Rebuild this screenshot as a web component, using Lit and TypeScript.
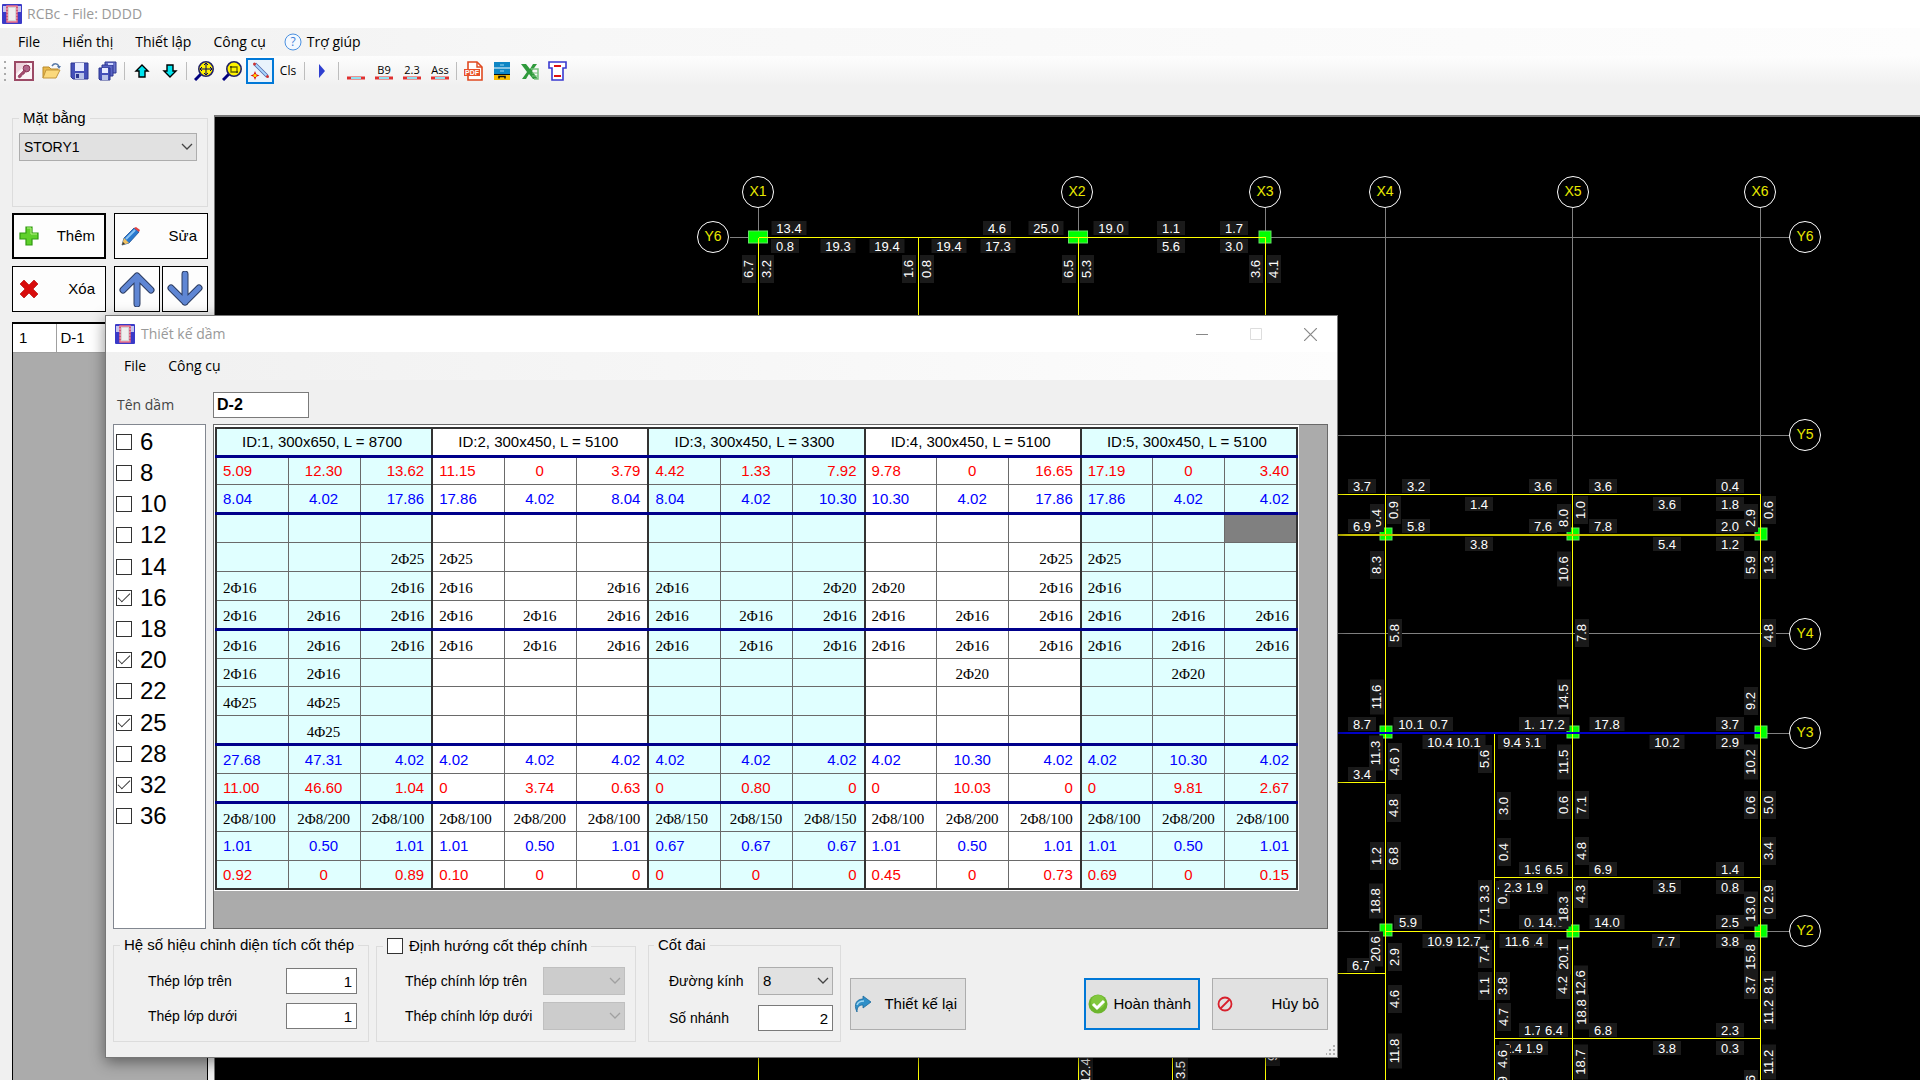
import { LitElement, html, svg, css } from "lit";
import { customElement, property } from "lit/decorators.js";
import { classMap } from "lit/directives/class-map.js";

/* ---------- icons ---------- */

const beamIcon = html`<svg class="icon" viewBox="0 0 20 20" width="20" height="20" aria-hidden="true">
  <rect width="20" height="20" rx="1" fill="#3a3ac8" />
  <path d="M1 2h4v6H1zM15 2h4v6h-4z" fill="#c4c4ec" />
  <path d="M5 2h10v16H5z" fill="#d4d4d4" stroke="#ee7088" stroke-width="1.5" />
  <path d="M5 3v14M15 3v14" stroke="#b03058" stroke-width="1" stroke-dasharray="1 2" />
  <path d="M7 4h6v12H7z" fill="#eeeeee" />
</svg>`;

const chevron = html`<svg class="chevron" viewBox="0 0 12 8" width="12" height="8" aria-hidden="true">
  <path d="M1 1l5 5 5-5" fill="none" stroke="currentColor" stroke-width="1.3" />
</svg>`;

const icons: Record<string, unknown> = {
  access: svg`<rect x="1" y="1" width="18" height="18" fill="#fbf3f6" stroke="#9c4a66" stroke-width="2"/>
    <path d="M2 13L13 2H2z" fill="#eed5de"/>
    <circle cx="12.5" cy="7.5" r="3.4" fill="#b0668a" stroke="#8c3354"/>
    <path d="M10 9l-6 6 1 2 2-1 1-2 2-1 2-3z" fill="#a34a6d" stroke="#8c3354" stroke-width=".6"/>`,
  open: svg`<path d="M1 17V6h6l2 2h7v3" fill="#e8b84a" stroke="#b98a2a"/>
    <path d="M1 17l3-8h14l-4 8z" fill="#fbd97c" stroke="#c2953a"/>
    <path d="M10 5c2-3 6-3 7 1" fill="none" stroke="#5577a5" stroke-width="1.5"/><path d="M15 5h4l-2 3z" fill="#5577a5"/>`,
  save: svg`<path d="M1 2h17v16H3l-2-2z" fill="#4450b8" stroke="#2c3690"/>
    <path d="M5 2h9v8H5z" fill="#e8ecff"/><path d="M5 12h9v6H5z" fill="#b8c2e8"/><path d="M6 13h3v4H6z" fill="#2c3690"/>`,
  saveAll: svg`<path d="M7 1h11v11H7z" fill="#6a74cc" stroke="#2c3690"/><path d="M4 4h11v11H4z" fill="#5a64c4" stroke="#2c3690"/>
    <path d="M1 7h11v12H2l-1-1z" fill="#4450b8" stroke="#2c3690"/><path d="M4 7h6v5H4z" fill="#e8ecff"/><path d="M4 14h6v5H4z" fill="#b8c2e8"/>
    <path d="M10 2h5v2h-5z" fill="#cdd4ff"/>`,
  up: svg`<path d="M10 4l6 6h-3v6H7v-6H4z" fill="#00e5f0" stroke="#000" stroke-width="1.4"/>`,
  down: svg`<path d="M10 16l6-6h-3V4H7v6H4z" fill="#00e5f0" stroke="#000" stroke-width="1.4"/>`,
  zoomAll: svg`<path d="M7 13l-6 6" stroke="#000080" stroke-width="3"/><circle cx="12" cy="8" r="7.2" fill="#fff200" stroke="#222266" stroke-width="1.6"/>
    <path d="M12 2v12M6 8h12M10 4l2-2 2 2M10 12l2 2 2-2M8 6L6 8l2 2M16 6l2 2-2 2" fill="none" stroke="#000060" stroke-width="1"/>`,
  zoomWin: svg`<path d="M7 13l-6 6" stroke="#000080" stroke-width="3"/><circle cx="12" cy="8" r="7.2" fill="#fff200" stroke="#222266" stroke-width="1.6"/>
    <path d="M9 6h6v5H9z" fill="none" stroke="#666600" stroke-width="1.3"/><path d="M8 5h2v2H8zM14 10h2v2h-2z" fill="#555500"/>`,
  draw: svg`<path d="M5 3l12 12" stroke="#5566aa" stroke-width="3.4"/><path d="M5 3l12 12" stroke="#a8d8ff" stroke-width="1.8"/>
    <circle cx="4.5" cy="3" r="1.5" fill="#c33"/><circle cx="17.5" cy="15.5" r="1.5" fill="#c33"/>
    <path d="M5 10l1.3 3.2L9.5 14.5l-3.2 1.3L5 19l-1.3-3.2L.5 14.5l3.2-1.3z" fill="#e01010"/><circle cx="5" cy="14.5" r="1.6" fill="#ffe000"/>`,
  play: svg`<path d="M7 3l6 7-6 7z" fill="#2f3fd0"/>`,
  pdf: svg`<path d="M4 1h9l5 5v13H4z" fill="#fff" stroke="#e04a20" stroke-width="1.6"/><path d="M13 1v5h5" fill="none" stroke="#e04a20" stroke-width="1.4"/>
    <rect x="0" y="8" width="16" height="7" fill="#e8502a"/><text x="8" y="14" font-size="7" font-weight="700" text-anchor="middle" fill="#fff" font-family="Liberation Sans, sans-serif">PDF</text>`,
  cabinet: svg`<rect x="2" y="1" width="16" height="13" fill="#0f86c4"/><path d="M2 7h16" stroke="#fff"/><path d="M8 4h4M8 10h4" stroke="#9ad8f4"/>
    <rect x="2" y="13" width="16" height="6" fill="#f8bc00"/><path d="M2 13.5h16" stroke="#111" stroke-width="1"/><path d="M7 17.5v-2h6v2" fill="none" stroke="#111" stroke-width="1.6"/>`,
  excel: svg`<path d="M1 3h5l4 5 3-5h4l-5 7 6 8h-5l-4-5-3 5H2l5-7z" fill="#2f9a3c"/><path d="M11 8h7v10h-4" fill="none" stroke="#79c27f" stroke-width="1.5"/><path d="M12 12h6M12 15h6" stroke="#79c27f"/>`,
  section: svg`<path d="M1 1h17v6h-3v12H4V7H1z" fill="#fff" stroke="#3a3ad0" stroke-width="1.6"/><path d="M6 5h7M6 15h7" stroke="#e01010" stroke-width="2"/>`,
};

const icon = (name: string) =>
  html`<svg class="icon" viewBox="0 0 20 20" width="20" height="20" aria-hidden="true">${icons[name]}</svg>`;

const lineIcon = (text: string) => html`<span class="lined"
  ><span class="lined-text">${text}</span
  ><svg viewBox="0 0 20 4" width="20" height="4" aria-hidden="true">
    <path d="M1 2h18" stroke="#e03030" stroke-width="3" /><path d="M5 2h10" stroke="#8fe0f0" stroke-width="2" /></svg
></span>`;

/* ---------- floor plan ---------- */

const X = { x1: 758, xm: 918, x2: 1078, x2b: 1172, x3: 1265, x4: 1385, x4b: 1494, x5: 1572, x6: 1760 };
const Y = { y6: 237, y5: 435, y4: 633, y3: 733, y2: 931 };

type Line = [number, number, number, number];

const axes: Line[] = [
  [X.x1, 207, X.x1, 237], [X.x2, 207, X.x2, 237], [X.x3, 207, X.x3, 237],
  [X.x4, 207, X.x4, 494], [X.x5, 207, X.x5, 494], [X.x6, 207, X.x6, 494],
  [729, Y.y6, 1790, Y.y6], [729, Y.y5, 1790, Y.y5], [729, Y.y4, 1790, Y.y4],
  [729, Y.y3, 1790, Y.y3], [729, Y.y2, 1790, Y.y2],
];

const beams: Line[] = [
  [X.x1, 237, X.x3, 237],
  [X.x1, 237, X.x1, 1400], [X.xm, 237, X.xm, 1400], [X.x2, 237, X.x2, 1400], [X.x3, 237, X.x3, 1400],
  [X.x2b, 900, X.x2b, 1400],
  [X.x3, 494, X.x6, 494],
  [X.x4, 494, X.x4, 1400], [X.x5, 494, X.x5, 1400], [X.x6, 494, X.x6, 1400],
  [X.x4b, Y.y3, X.x4b, 1400],
  [X.x3, 782, X.x4, 782], [X.x4b, 877, X.x6, 877], [X.x4, Y.y2, X.x6, Y.y2],
  [X.x3, 973, X.x4, 973], [X.x4b, 1038, X.x6, 1038],
];

/* centre x, centre y, width of each column section */
const columns: [number, number, number][] = [
  [758, 237, 19], [1078, 237, 19], [1265, 237, 12],
  [1386, 534, 12], [1573, 534, 12], [1761, 534, 12],
  [1386, 732, 12], [1573, 732, 12], [1761, 732, 12],
  [1386, 930, 12], [1573, 931, 12], [1761, 931, 12],
];

const bubbles: [string, number, number][] = [
  ["X1", 758, 192], ["X2", 1077, 192], ["X3", 1265, 192], ["X4", 1385, 192], ["X5", 1573, 192], ["X6", 1760, 192],
  ["Y6", 713, 237], ["Y6", 1805, 237], ["Y5", 1805, 435], ["Y4", 1805, 634], ["Y3", 1805, 733], ["Y2", 1805, 931],
];

/* text, centre x, centre y, 1 when the value runs along a vertical beam */
const values: [string, number, number, number][] = [
  ["13.4", 789, 228, 0], ["0.8", 785, 246, 0], ["19.3", 838, 246, 0], ["19.4", 887, 246, 0], ["19.4", 949, 246, 0],
  ["17.3", 998, 246, 0], ["4.6", 997, 228, 0], ["25.0", 1046, 228, 0], ["19.0", 1111, 228, 0], ["1.1", 1171, 228, 0],
  ["1.7", 1234, 228, 0], ["5.6", 1171, 246, 0], ["3.0", 1234, 246, 0],
  ["6.7", 749, 269, 1], ["3.2", 767, 269, 1], ["1.6", 909, 269, 1], ["0.8", 927, 269, 1],
  ["6.5", 1069, 269, 1], ["5.3", 1087, 269, 1], ["3.6", 1256, 269, 1], ["4.1", 1274, 269, 1],

  ["3.7", 1362, 486, 0], ["3.2", 1416, 486, 0], ["3.6", 1543, 486, 0], ["3.6", 1603, 486, 0], ["0.4", 1730, 486, 0],
  ["1.4", 1479, 504, 0], ["3.6", 1667, 504, 0], ["1.8", 1730, 504, 0],
  ["0.4", 1377, 518, 1], ["6.9", 1362, 526, 0], ["5.8", 1416, 526, 0], ["7.6", 1543, 526, 0], ["7.8", 1603, 526, 0],
  ["2.0", 1730, 526, 0], ["3.8", 1479, 544, 0], ["5.4", 1667, 544, 0], ["1.2", 1730, 544, 0],
  ["0.9", 1394, 510, 1], ["8.0", 1564, 518, 1], ["1.0", 1581, 510, 1], ["2.9", 1751, 518, 1], ["0.6", 1769, 510, 1],
  ["8.3", 1377, 565, 1], ["10.6", 1564, 569, 1], ["5.9", 1751, 565, 1], ["1.3", 1769, 565, 1],
  ["5.8", 1395, 633, 1], ["7.8", 1582, 633, 1], ["4.8", 1769, 633, 1],
  ["11.6", 1377, 697, 1], ["14.5", 1564, 697, 1], ["9.2", 1751, 701, 1],

  ["8.7", 1362, 724, 0], ["0.7", 1439, 724, 0], ["10.1", 1411, 724, 0], ["1.0", 1533, 724, 0], ["17.2", 1552, 724, 0],
  ["17.8", 1607, 724, 0], ["3.7", 1730, 724, 0],
  ["11.3", 1376, 753, 1], ["3.0", 1395, 757, 1], ["4.6", 1395, 766, 1], ["5.6", 1485, 759, 1],
  ["10.1", 1468, 742, 0], ["10.4", 1440, 742, 0], ["6.1", 1532, 742, 0], ["9.4", 1512, 742, 0], ["10.2", 1667, 742, 0],
  ["2.9", 1730, 742, 0],
  ["11.5", 1564, 762, 1], ["10.2", 1751, 762, 1], ["3.4", 1362, 774, 0],
  ["4.8", 1394, 808, 1], ["3.0", 1504, 806, 1], ["0.6", 1564, 805, 1], ["7.1", 1582, 805, 1], ["0.6", 1751, 805, 1],
  ["5.0", 1769, 805, 1],
  ["1.2", 1377, 856, 1], ["6.8", 1394, 856, 1], ["0.4", 1504, 852, 1], ["4.8", 1582, 851, 1], ["3.4", 1769, 851, 1],

  ["1.9", 1533, 869, 0], ["6.5", 1554, 869, 0], ["6.9", 1603, 869, 0], ["1.4", 1730, 869, 0],
  ["0.4", 1503, 895, 1], ["1.9", 1534, 887, 0], ["2.3", 1513, 887, 0], ["3.5", 1667, 887, 0], ["0.8", 1730, 887, 0],
  ["18.8", 1376, 901, 1], ["3.3", 1485, 894, 1], ["7.1", 1485, 916, 1], ["4.3", 1581, 894, 1],
  ["0.8", 1769, 905, 1], ["2.9", 1769, 894, 1],
  ["5.9", 1408, 922, 0], ["0.3", 1533, 922, 0], ["14.0", 1551, 922, 0], ["14.0", 1607, 922, 0], ["2.5", 1730, 922, 0],
  ["18.3", 1564, 909, 1], ["13.0", 1751, 909, 1],
  ["12.7", 1468, 941, 0], ["10.9", 1440, 941, 0], ["6.4", 1534, 941, 0], ["11.6", 1517, 941, 0], ["7.7", 1666, 941, 0],
  ["3.8", 1730, 941, 0],
  ["6.7", 1361, 965, 0], ["20.6", 1376, 949, 1], ["2.9", 1395, 957, 1], ["7.4", 1485, 954, 1], ["20.1", 1564, 957, 1],
  ["15.8", 1751, 957, 1],
  ["1.1", 1485, 986, 1], ["3.8", 1503, 986, 1], ["4.2", 1563, 985, 1], ["12.6", 1581, 983, 1], ["18.8", 1582, 1012, 1],
  ["3.7", 1751, 985, 1], ["8.1", 1769, 985, 1], ["11.2", 1769, 1012, 1],
  ["4.6", 1395, 999, 1], ["4.7", 1504, 1017, 1],
  ["1.7", 1533, 1030, 0], ["6.4", 1554, 1030, 0], ["6.8", 1603, 1030, 0], ["2.3", 1730, 1030, 0],
  ["1.9", 1534, 1048, 0], ["2.4", 1513, 1048, 0], ["3.8", 1667, 1048, 0], ["0.3", 1730, 1048, 0],
  ["11.8", 1395, 1051, 1], ["1.9", 1503, 1085, 1], ["4.6", 1503, 1059, 1], ["18.7", 1581, 1062, 1],
  ["11.2", 1769, 1062, 1], ["2.6", 1751, 1084, 1],
  ["12.4", 1086, 1071, 1], ["3.5", 1181, 1070, 1], ["9.0", 1273, 1052, 1],
];

@customElement("floor-plan")
class FloorPlan extends LitElement {
  static styles = css`
    :host { display: block; background: #000; overflow: hidden; }
    .plan { display: block; width: 100%; height: 100%; font-family: "Liberation Sans", Arial, sans-serif; }
    .axis { stroke: #808080; shape-rendering: crispEdges; }
    .beam { stroke: #ffff00; shape-rendering: crispEdges; }
    .wide { stroke: #c8c000; stroke-width: 2; shape-rendering: crispEdges; }
    .blue { stroke: #0000c8; stroke-width: 2; shape-rendering: crispEdges; }
    .column { fill: #00ff00; stroke: #66e066; }
    .bubble { fill: #000; stroke: #fff; }
    .name { fill: #e8e800; font-size: 14px; text-anchor: middle; }
    .plate { fill: #1a1a1a; }
    .value { fill: #fff; font-size: 13px; text-anchor: middle; }
  `;
  render() {
    const line = (cls: string) => ([a, b, c, d]: Line) =>
      svg`<line class=${cls} x1=${a + 0.5} y1=${b + 0.5} x2=${c + 0.5} y2=${d + 0.5}></line>`;
    return html`<svg class="plan" role="img" aria-label="STORY1">
      <g transform="translate(-215 -117)">
        ${axes.map(line("axis"))}
        ${columns.map(([x, y, w]) => svg`<rect class="column" x=${x - w / 2} y=${y - 6} width=${w} height="12"></rect>`)}
        ${beams.map(line("beam"))}
        <line class="wide" x1="1265" y1="535" x2="1760" y2="535"></line>
        <line class="blue" x1="1265" y1="733" x2="1760" y2="733"></line>
        ${bubbles.map(([t, x, y]) => svg`<circle class="bubble" cx=${x} cy=${y} r="15.5"></circle>
          <text class="name" x=${x} y=${y + 4}>${t}</text>`)}
        ${values.map(([t, x, y, v]) => {
          const w = t.length > 3 ? 35 : 28;
          return svg`<g transform="translate(${x} ${y}) rotate(${v ? -90 : 0})">
            <rect class="plate" x=${-w / 2} y="-7" width=${w} height="14"></rect>
            <text class="value" y=${v ? 4 : 5}>${t}</text></g>`;
        })}
      </g>
    </svg>`;
  }
}

/* ---------- reinforcement table ---------- */

const spans = ["ID:1, 300x650, L = 8700", "ID:2, 300x450, L = 5100", "ID:3, 300x450, L = 3300", "ID:4, 300x450, L = 5100", "ID:5, 300x450, L = 5100"];

type Row = { kind: "need" | "have" | "bar"; thick?: boolean; cells: string };
const rows: Row[] = [
  { kind: "need", cells: "5.09|12.30|13.62|11.15|0|3.79|4.42|1.33|7.92|9.78|0|16.65|17.19|0|3.40" },
  { kind: "have", thick: true, cells: "8.04|4.02|17.86|17.86|4.02|8.04|8.04|4.02|10.30|10.30|4.02|17.86|17.86|4.02|4.02" },
  { kind: "bar", cells: "||||||||||||||" },
  { kind: "bar", cells: "||2Φ25|2Φ25||||||||2Φ25|2Φ25||" },
  { kind: "bar", cells: "2Φ16||2Φ16|2Φ16||2Φ16|2Φ16||2Φ20|2Φ20||2Φ16|2Φ16||" },
  { kind: "bar", thick: true, cells: Array(15).fill("2Φ16").join("|") },
  { kind: "bar", cells: Array(15).fill("2Φ16").join("|") },
  { kind: "bar", cells: "2Φ16|2Φ16|||||||||2Φ20|||2Φ20|" },
  { kind: "bar", cells: "4Φ25|4Φ25|||||||||||||" },
  { kind: "bar", thick: true, cells: "|4Φ25|||||||||||||" },
  { kind: "have", cells: "27.68|47.31|4.02|4.02|4.02|4.02|4.02|4.02|4.02|4.02|10.30|4.02|4.02|10.30|4.02" },
  { kind: "need", thick: true, cells: "11.00|46.60|1.04|0|3.74|0.63|0|0.80|0|0|10.03|0|0|9.81|2.67" },
  { kind: "bar", cells: "2Φ8/100|2Φ8/200|2Φ8/100|2Φ8/100|2Φ8/200|2Φ8/100|2Φ8/150|2Φ8/150|2Φ8/150|2Φ8/100|2Φ8/200|2Φ8/100|2Φ8/100|2Φ8/200|2Φ8/100" },
  { kind: "have", cells: "1.01|0.50|1.01|1.01|0.50|1.01|0.67|0.67|0.67|1.01|0.50|1.01|1.01|0.50|1.01" },
  { kind: "need", cells: "0.92|0|0.89|0.10|0|0|0|0|0|0.45|0|0.73|0.69|0|0.15" },
];

@customElement("rebar-table")
class RebarTable extends LitElement {
  static styles = css`
    :host { display: block; }
    table { width: 100%; height: 463px; table-layout: fixed; border-collapse: collapse; background: #fff;
      border: 2px solid #333; font: 15px/20px "Liberation Sans", Arial, sans-serif; }
    tr { height: 28px; }
    th, td { box-sizing: border-box; padding: 1px 7px 0 6px; border: 1px solid #6a6a6a; font-weight: 400; white-space: nowrap; overflow: hidden; }
    th { border: 2px solid #333; border-bottom: 3px solid #00008b; text-align: center; padding: 1px 8px 0 4px; }
    .tint { background: #e0ffff; }
    .mid { text-align: center; }
    .end { text-align: right; border-right: 2px solid #333; }
    .thick td { border-bottom: 3px solid #00008b; }
    .need { color: #f00; }
    .have { color: #00f; }
    .bar { font-family: "Liberation Serif", "Times New Roman", serif; }
    .bar td { padding-top: 4px; }
    .current { background: #808080; }
  `;
  render() {
    return html`<table>
      <thead><tr>${spans.map((s, i) => html`<th colspan="3" class=${classMap({ tint: i % 2 === 0 })}>${s}</th>`)}</tr></thead>
      <tbody>
        ${rows.map((r, ri) => html`<tr class=${classMap({ [r.kind]: true, thick: !!r.thick })}>
          ${r.cells.split("|").map((c, i) => html`<td class=${classMap({
            tint: Math.floor(i / 3) % 2 === 0, mid: i % 3 === 1, end: i % 3 === 2, current: ri === 2 && i === 14,
          })}>${c}</td>`)}
        </tr>`)}
      </tbody>
    </table>`;
  }
}

/* ---------- shared control styles ---------- */

const controls = css`
  * { box-sizing: border-box; }
  .ui { font-family: "Open Sans", "Noto Sans", sans-serif; }
  button { font: inherit; color: inherit; padding: 0; margin: 0; border: 0; background: none; }
  svg { display: block; flex: none; }
  fieldset { margin: 0; padding: 0; border: 1px solid #dcdcdc; min-width: 0; }
  legend { padding: 0 4px; line-height: 16px; white-space: nowrap; }
  .combo { display: grid; align-items: center; color: #444; }
  .combo select { grid-area: 1 / 1; appearance: none; width: 100%; height: 28px; margin: 0; padding: 0 4px; border: 1px solid #adadad;
    border-radius: 0; background: #e1e1e1; color: #000; font: inherit; opacity: 1; }
  .combo .chevron { grid-area: 1 / 1; justify-self: end; margin-right: 4px; pointer-events: none; }
  .combo select:disabled { background: #ccc; border-color: #bfbfbf; }
  .combo.off { color: #a0a0a0; }
  .box { appearance: none; width: 16px; height: 16px; margin: 0; border: 1px solid #333; background: #fff; display: grid; place-items: center; flex: none; }
  .box:checked::before { content: ""; width: 11px; height: 5px; border: solid #333; border-width: 0 0 1px 1px; transform: translateY(-2px) rotate(-45deg); }
  .menu { display: flex; align-items: center; height: 28px; font-size: 14px; }
  .menu button { display: flex; align-items: center; gap: 5px; padding: 0 11px; height: 28px; }
  .caption { display: flex; align-items: center; color: #999; font-size: 14px; background: #fff; }
`;

/* ---------- beam design window ---------- */

@customElement("beam-dialog")
class BeamDialog extends LitElement {
  @property({ attribute: false }) sizes = [6, 8, 10, 12, 14, 16, 18, 20, 22, 25, 28, 32, 36];
  @property({ attribute: false }) picked = [16, 20, 25, 32];

  static styles = [controls, css`
    :host { display: block; background: #f0f0f0; border: 1px solid #777; box-shadow: 0 4px 14px rgba(0, 0, 0, 0.45);
      font: 15px/20px "Liberation Sans", Arial, sans-serif; color: #000; }
    .caption { height: 36px; padding: 0 19px 0 9px; gap: 6px; }
    .caption h2 { margin: 0; flex: 1; font-size: 14px; font-weight: 400; }
    .win { width: 16px; height: 36px; margin-left: 32px; display: grid; place-items: center; }
    .menu { padding-left: 7px; background: linear-gradient(90deg, #f0f0f0, #fdfdfd); }
    .name { display: flex; align-items: center; padding: 12px 12px 0 11px; }
    .name label { width: 96px; font-size: 14px; color: #444; }
    .field { height: 26px; border: 1px solid #7a7a7a; border-radius: 0; background: #fff; margin: 0; padding: 0 4px; font: inherit; min-width: 0; }
    .name .field { width: 96px; font-weight: 700; font-size: 16px; padding: 0 3px; }
    .work { display: flex; gap: 7px; padding: 6px 9px 0 7px; }
    .sizes { list-style: none; margin: 0; padding: 1px 2px 96px; width: 93px; height: 505px; border: 1px solid #828790; background: #fff;
      display: grid; grid-template-rows: repeat(13, 1fr); font-size: 24px; line-height: 30px; }
    .sizes label { display: flex; align-items: center; gap: 8px; height: 100%; }
    .sheet { flex: 1; min-width: 0; background: #ababab; border: 1px solid #696969; padding: 0 28px 0 0; }
    .sheet rebar-table { background: #fff; padding: 2px 1px 1px; }
    .foot { display: flex; align-items: flex-start; padding: 8px 9px 15px 7px; }
    .foot fieldset { height: 105px; }
    .foot .area { width: 256px; padding: 14px 11px 0 34px; }
    .foot .main { width: 260px; margin-left: 7px; padding: 12px 10px 0 28px; }
    .foot .tie { width: 193px; margin-left: 12px; padding: 14px 7px 0 20px; }
    .area legend { margin-left: -28px; }
    .tie legend { margin-left: -15px; }
    .main legend { display: flex; align-items: center; gap: 6px; margin-left: -22px; height: 18px; }
    .pair { display: flex; align-items: center; justify-content: space-between; height: 28px; margin-bottom: 7px; font-size: 14px; }
    .pair .field, .pair select { font-size: 15px; }
    .area .field { width: 71px; text-align: right; }
    .main .combo { width: 82px; }
    .tie .combo, .tie .field { width: 75px; }
    .tie .field { text-align: right; }
    .tie .pair { margin-bottom: 9px; }
    .act { display: flex; align-items: center; justify-content: space-between; width: 116px; height: 52px; margin-top: 41px; padding: 0 8px 0 3px;
      border: 1px solid #adadad; background: #e1e1e1; }
    .redo { margin-left: 9px; }
    .ok { margin-left: auto; border: 2px solid #0078d7; padding: 0 7px 0 2px; }
    .cancel { margin-left: 12px; }
    .grip { position: absolute; right: 1px; bottom: 2px; }
  `];

  render() {
    return html`
      <header class="caption ui">
        ${beamIcon}
        <h2>Thiết kế dầm</h2>
        <button class="win" aria-label="Minimize"><svg width="12" height="12"><path d="M0 6.5h12" stroke="#888" /></svg></button>
        <button class="win" aria-label="Maximize" disabled><svg width="12" height="12"><path d="M.5.5h11v11H.5z" fill="none" stroke="#ddd" /></svg></button>
        <button class="win" aria-label="Close"><svg width="13" height="13"><path d="M0 0l13 13M13 0L0 13" stroke="#888" stroke-width="1.2" /></svg></button>
      </header>
      <nav class="menu ui"><button>File</button><button>Công cụ</button></nav>
      <div class="name"><label class="ui" for="beam-name">Tên dầm</label><input id="beam-name" class="field" .value=${"D-2"} /></div>
      <div class="work">
        <ul class="sizes">
          ${this.sizes.map((s) => html`<li><label><input type="checkbox" class="box" .checked=${this.picked.includes(s)} />${s}</label></li>`)}
        </ul>
        <div class="sheet"><rebar-table></rebar-table></div>
      </div>
      <div class="foot">
        <fieldset class="area">
          <legend>Hệ số hiệu chỉnh diện tích cốt thép</legend>
          <div class="pair"><label for="k-top">Thép lớp trên</label><input id="k-top" class="field" .value=${"1"} /></div>
          <div class="pair"><label for="k-bot">Thép lớp dưới</label><input id="k-bot" class="field" .value=${"1"} /></div>
        </fieldset>
        <fieldset class="main">
          <legend><input type="checkbox" class="box" id="orient" /><label for="orient">Định hướng cốt thép chính</label></legend>
          <div class="pair"><label for="m-top">Thép chính lớp trên</label><span class="combo off"><select id="m-top" disabled></select>${chevron}</span></div>
          <div class="pair"><label for="m-bot">Thép chính lớp dưới</label><span class="combo off"><select id="m-bot" disabled></select>${chevron}</span></div>
        </fieldset>
        <fieldset class="tie">
          <legend>Cốt đai</legend>
          <div class="pair"><label for="dia">Đường kính</label><span class="combo"><select id="dia"><option>8</option></select>${chevron}</span></div>
          <div class="pair"><label for="legs">Số nhánh</label><input id="legs" class="field" .value=${"2"} /></div>
        </fieldset>
        <button class="act redo">
          <svg viewBox="0 0 18 18" width="18" height="18"><path d="M3 17C-1 9 3 4 9 4V1l8 6-8 6v-3c-4 0-6 2-6 7z" fill="#2f8fc8" stroke="#1d6a9c" stroke-width=".8" /><path d="M3 10c1-3 4-4 7-4" fill="none" stroke="#9ed6f2" stroke-width="1.5" /></svg>
          Thiết kế lại
        </button>
        <button class="act ok">
          <svg viewBox="0 0 20 20" width="20" height="20"><circle cx="10" cy="10" r="9.5" fill="#6cb52d" /><circle cx="10" cy="8" r="7" fill="#82c83e" /><path d="M5 10l4 4 7-7" fill="none" stroke="#fff" stroke-width="3" /></svg>
          Hoàn thành
        </button>
        <button class="act cancel">
          <svg viewBox="0 0 18 18" width="18" height="18"><circle cx="9" cy="9" r="6.5" fill="none" stroke="#d8202c" stroke-width="1.8" /><path d="M4.5 13.5l9-9" stroke="#d8202c" stroke-width="1.8" /></svg>
          Hủy bỏ
        </button>
      </div>
      <svg class="grip" width="10" height="10" aria-hidden="true"><path d="M7 0h2v2H7zM7 4h2v2H7zM7 8h2v2H7zM3 4h2v2H3zM3 8h2v2H3zM0 8h1v2H0z" fill="#b0b0b0" /></svg>
    `;
  }
}

/* ---------- main window ---------- */

@customElement("app-root")
class AppRoot extends LitElement {
  static styles = [controls, css`
    :host { display: flex; flex-direction: column; height: 100vh; position: relative; overflow: hidden; background: #f0f0f0;
      font: 15px/20px "Liberation Sans", Arial, sans-serif; color: #000; }
    .caption { height: 28px; padding-left: 2px; gap: 5px; }
    .caption h1 { margin: 0; font-size: 14px; font-weight: 400; }
    .menu { padding-left: 7px; background: linear-gradient(90deg, #f0f0f0, #f7f7f7 30%, #fdfdfd); }
    .menu .help { padding-left: 7px; }
    .tools { display: flex; align-items: center; height: 30px; background: linear-gradient(#fdfdfd, #f0f0f0); }
    .handle { width: 2px; height: 20px; margin: 0 4px; background: repeating-linear-gradient(#aaa 0 2px, transparent 2px 6px); }
    .tools button { display: grid; place-items: center; width: 28px; height: 28px; font-size: 12px; }
    .tools .on { border: 2px solid #0078d7; background: #e9f3fc; height: 26px; }
    .split { width: 1px; height: 18px; margin: 0 3px 0 2px; background: #bdbdbd; }
    .lined { display: grid; justify-items: center; }
    .lined-text { height: 13px; font-size: 11px; line-height: 13px; }
    .body { flex: 1; display: flex; min-height: 0; padding-top: 29px; }
    aside { width: 208px; padding-left: 12px; margin-top: -5px; display: flex; flex-direction: column; }
    .story { height: 97px; padding: 7px 10px 0 6px; }
    .story select { font-size: 14px; }
    .pads { display: grid; grid-template-columns: 94px 1fr; gap: 7px 8px; margin-top: 6px; }
    .pad { display: flex; align-items: center; justify-content: space-between; height: 46px; border: 1px solid #000; background: #fdfdfd; padding: 0 10px 0 6px; }
    .pad.main { border-width: 2px; padding: 0 9px 0 5px; }
    .arrows { display: grid; grid-template-columns: 1fr 1fr; gap: 2px; }
    .arrows .pad { justify-content: center; padding: 0; }
    .list { flex: 1; margin-top: 10px; background: #ababab; border: 1px solid #000; border-top-width: 2px; border-bottom: 0; }
    .list table { width: 100%; border-collapse: collapse; background: #fff; }
    .list td { height: 28px; padding: 0 4px; border-bottom: 1px solid #a0a0a0; border-right: 1px solid #a0a0a0; }
    .list td:first-child { width: 43px; padding-left: 6px; }
    .view { flex: 1; min-width: 0; margin-left: 6px; border-top: 2px solid #777; border-left: 1px solid #777; }
    .design { position: absolute; left: 105px; top: 315px; width: min(1233px, calc(100vw - 120px)); }
  `];

  tool(label: string, content: unknown, on = false) {
    return html`<button class=${classMap({ on, ui: true })} aria-label=${label}>${content}</button>`;
  }

  render() {
    const split = html`<span class="split"></span>`;
    return html`
      <header class="caption ui">${beamIcon}<h1>RCBc - File: DDDD</h1></header>
      <nav class="menu ui">
        <button>File</button><button>Hiển thị</button><button>Thiết lập</button><button>Công cụ</button>
        <button class="help"><svg width="18" height="18" viewBox="0 0 18 18"><circle cx="9" cy="9" r="8" fill="#f4f9ff" stroke="#4a90e0" /><text x="9" y="13" font-size="12" text-anchor="middle" fill="#3f7fd8">?</text></svg>Trợ giúp</button>
      </nav>
      <div class="tools">
        <span class="handle"></span>
        ${this.tool("Access", icon("access"))}${this.tool("Open", icon("open"))}${this.tool("Save", icon("save"))}${this.tool("Save all", icon("saveAll"))}
        ${split}${this.tool("Up", icon("up"))}${this.tool("Down", icon("down"))}
        ${split}${this.tool("Zoom all", icon("zoomAll"))}${this.tool("Zoom window", icon("zoomWin"))}${this.tool("Draw", icon("draw"), true)}${this.tool("Cls", "Cls")}
        ${split}${this.tool("Run", icon("play"))}
        ${split}${this.tool("Line", lineIcon(""))}${this.tool("B9", lineIcon("B9"))}${this.tool("2.3", lineIcon("2.3"))}${this.tool("Ass", lineIcon("Ass"))}
        ${split}${this.tool("PDF", icon("pdf"))}${this.tool("Archive", icon("cabinet"))}${this.tool("Excel", icon("excel"))}${this.tool("Section", icon("section"))}
      </div>
      <div class="body">
        <aside>
          <fieldset class="story">
            <legend><label for="story">Mặt bằng</label></legend>
            <span class="combo"><select id="story"><option>STORY1</option></select>${chevron}</span>
          </fieldset>
          <div class="pads">
            <button class="pad main"><svg viewBox="0 0 20 20" width="20" height="20"><path d="M7 1h6v6h6v6h-6v6H7v-6H1V7h6z" fill="#5fd02c" stroke="#2f9a10" stroke-width="1.2" /><path d="M8 2h4v6h6" fill="none" stroke="#b4f080" /></svg>Thêm</button>
            <button class="pad"><svg viewBox="0 0 20 20" width="20" height="20"><path d="M1 19l2-7L13 2l5 4L8 17z" fill="#2a7ad0" stroke="#1c4f94" stroke-width=".8" /><path d="M5 13L14 4" stroke="#8cc4f4" stroke-width="2" /><path d="M1 19l2-7 5 5z" fill="#f0c060" /><path d="M13 2l2-1 4 3-1 2z" fill="#e04040" /><path d="M1 19l1-3 2 2z" fill="#333" /></svg>Sửa</button>
            <button class="pad"><svg viewBox="0 0 20 20" width="20" height="20"><path d="M5 1l5 5 5-5 4 4-5 5 5 5-4 4-5-5-5 5-4-4 5-5-5-5z" fill="#d80c0c" stroke="#b00000" stroke-width=".6" /></svg>Xóa</button>
            <div class="arrows">
              <button class="pad" aria-label="Move up"><svg viewBox="0 0 36 36" width="36" height="36"><path d="M18 33V5M4 19L18 5l14 14" fill="none" stroke="#2c3c60" stroke-width="7" stroke-linecap="round" stroke-linejoin="round" /><path d="M18 33V5M4 19L18 5l14 14" fill="none" stroke="#5f86d4" stroke-width="5" stroke-linecap="round" stroke-linejoin="round" /></svg></button>
              <button class="pad" aria-label="Move down"><svg viewBox="0 0 36 36" width="36" height="36"><path d="M18 3v28M4 17l14 14 14-14" fill="none" stroke="#2c3c60" stroke-width="7" stroke-linecap="round" stroke-linejoin="round" /><path d="M18 3v28M4 17l14 14 14-14" fill="none" stroke="#5f86d4" stroke-width="5" stroke-linecap="round" stroke-linejoin="round" /></svg></button>
            </div>
          </div>
          <div class="list"><table><tbody><tr><td>1</td><td>D-1</td></tr></tbody></table></div>
        </aside>
        <floor-plan class="view"></floor-plan>
      </div>
      <beam-dialog class="design"></beam-dialog>
    `;
  }
}
